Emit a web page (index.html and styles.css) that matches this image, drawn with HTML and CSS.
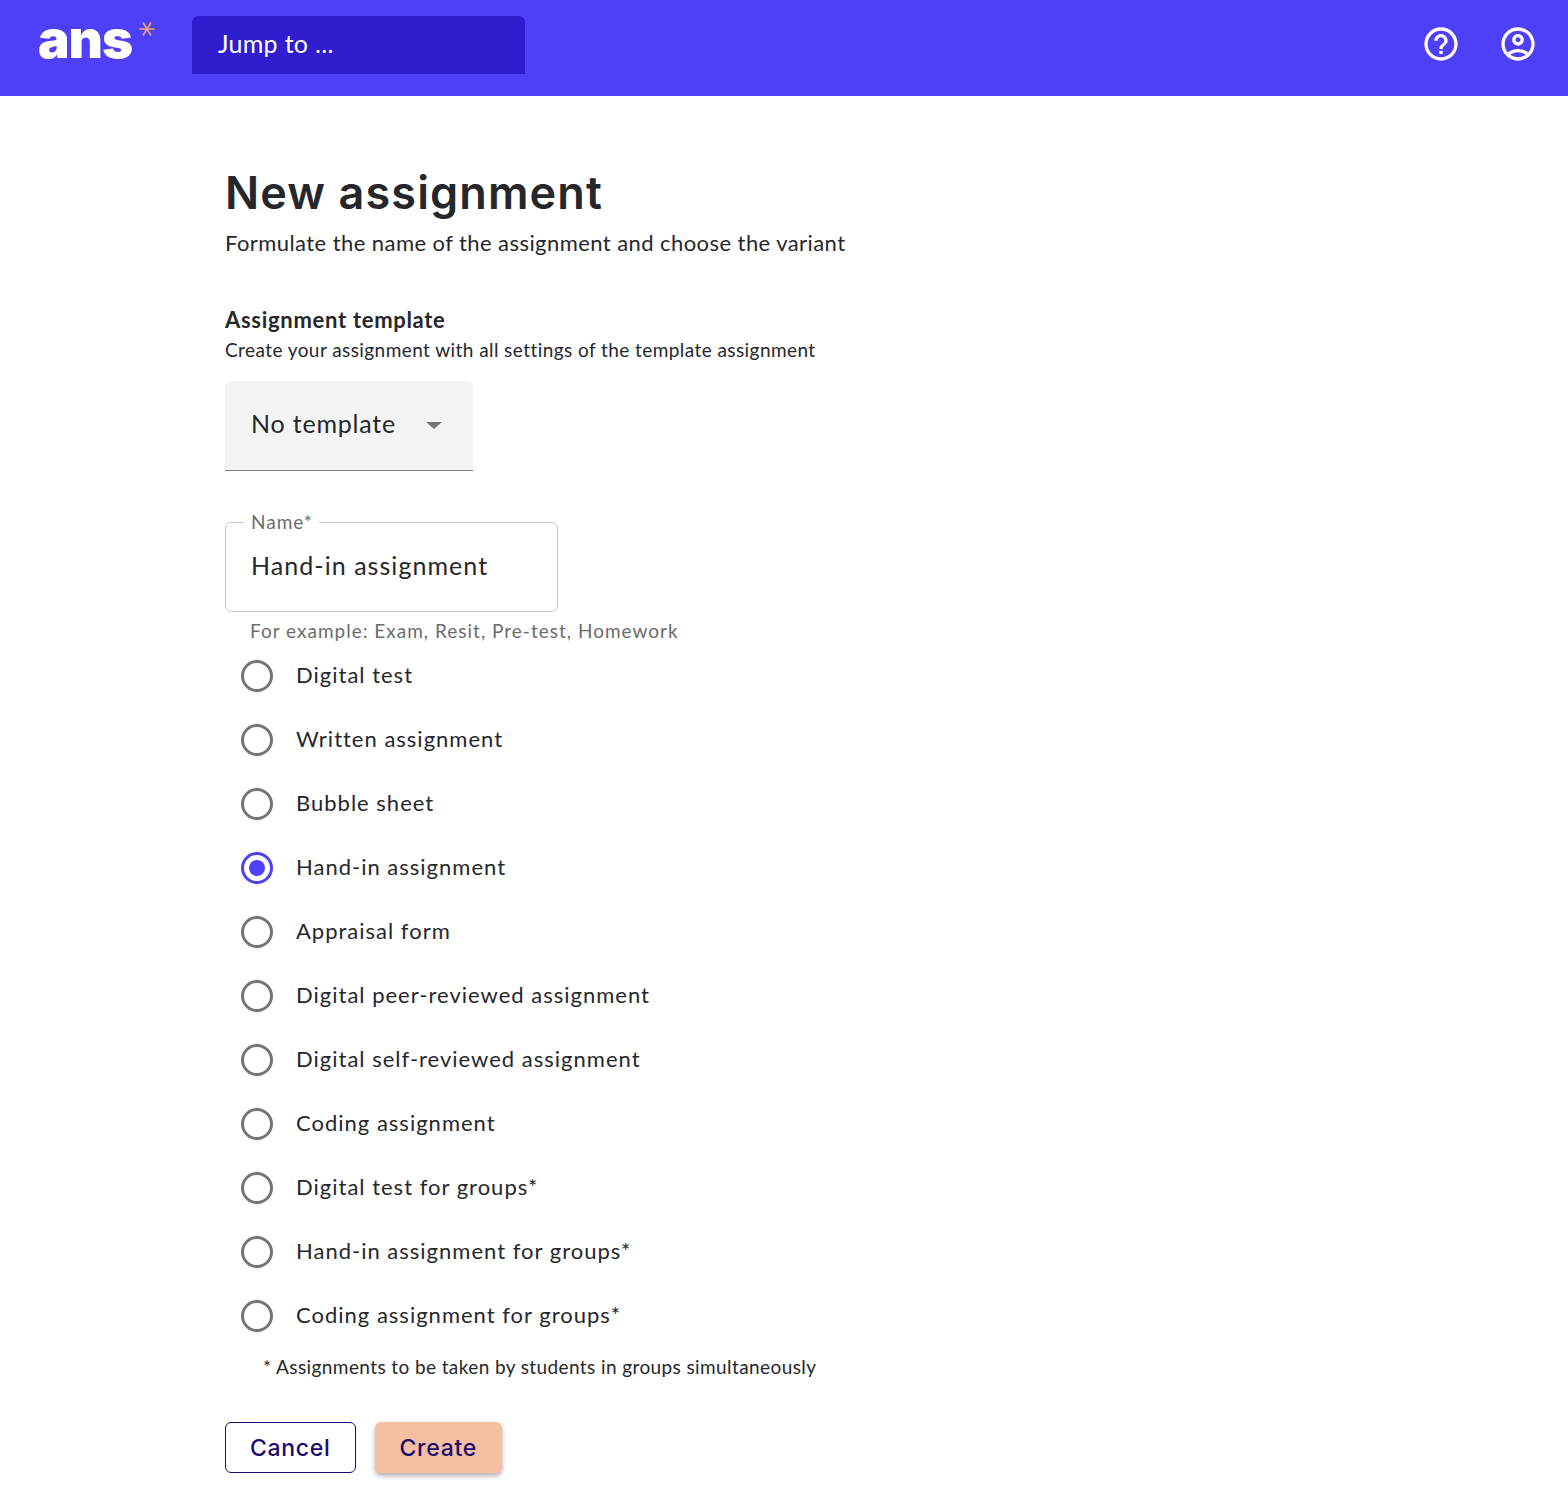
FILE: index.html
```html
<!DOCTYPE html>
<html lang="en">
<head>
    <meta charset="UTF-8">
    <title>New assignment</title>
    <link rel="stylesheet" href="styles.css">
</head>
<body>
    <header class="topbar">
        <div class="logo">
            <span class="logo-word">ans</span>
            <svg class="logo-star" viewBox="0 0 16 16"><path d="M0.5 8h15M4 1.5l8 13M12 1.5l-8 13"/></svg>
        </div>
        <div class="jump">Jump to ...</div>
        <div class="topbar-icons">
            <svg class="icon" viewBox="0 0 24 24"><path d="M11 18h2v-2h-2v2zm1-16C6.48 2 2 6.48 2 12s4.48 10 10 10 10-4.48 10-10S17.52 2 12 2zm0 18c-4.41 0-8-3.59-8-8s3.59-8 8-8 8 3.59 8 8-3.59 8-8 8zm0-14c-2.21 0-4 1.79-4 4h2c0-1.1.9-2 2-2s2 .9 2 2c0 2-3 1.75-3 5h2c0-2.25 3-2.5 3-5 0-2.21-1.79-4-4-4z"/></svg>
            <svg class="icon" viewBox="0 0 24 24"><path d="M12 2C6.48 2 2 6.48 2 12s4.48 10 10 10 10-4.48 10-10S17.52 2 12 2zM7.35 18.5C8.66 17.56 10.26 17 12 17s3.34.56 4.65 1.5c-1.31.94-2.91 1.5-4.65 1.5s-3.34-.56-4.65-1.5zm10.79-1.38C16.45 15.8 14.32 15 12 15s-4.45.8-6.14 2.12C4.7 15.73 4 13.95 4 12c0-4.42 3.58-8 8-8s8 3.58 8 8c0 1.95-.7 3.73-1.86 5.12z"/><path d="M12 6c-1.93 0-3.5 1.57-3.5 3.5S10.07 13 12 13s3.5-1.57 3.5-3.5S13.93 6 12 6zm0 5c-.83 0-1.5-.67-1.5-1.5S11.17 8 12 8s1.5.67 1.5 1.5S12.83 11 12 11z"/></svg>
        </div>
    </header>

    <main class="content">
        <h1 class="title">New assignment</h1>
        <p class="subtitle">Formulate the name of the assignment and choose the variant</p>

        <h2 class="section-title">Assignment template</h2>
        <p class="section-text">Create your assignment with all settings of the template assignment</p>

        <div class="select">
            <span class="select-text">No template</span>
            <span class="select-arrow"></span>
        </div>

        <div class="field">
            <span class="field-label">Name*</span>
            <span class="field-value">Hand-in assignment</span>
        </div>
        <p class="hint">For example: Exam, Resit, Pre-test, Homework</p>

        <div class="radios">
            <div class="radio-row"><span class="radio"></span>Digital test</div>
            <div class="radio-row"><span class="radio"></span>Written assignment</div>
            <div class="radio-row"><span class="radio"></span>Bubble sheet</div>
            <div class="radio-row"><span class="radio checked"></span>Hand-in assignment</div>
            <div class="radio-row"><span class="radio"></span>Appraisal form</div>
            <div class="radio-row"><span class="radio"></span>Digital peer-reviewed assignment</div>
            <div class="radio-row"><span class="radio"></span>Digital self-reviewed assignment</div>
            <div class="radio-row"><span class="radio"></span>Coding assignment</div>
            <div class="radio-row"><span class="radio"></span>Digital test for groups*</div>
            <div class="radio-row"><span class="radio"></span>Hand-in assignment for groups*</div>
            <div class="radio-row"><span class="radio"></span>Coding assignment for groups*</div>
        </div>
        <p class="footnote">* Assignments to be taken by students in groups simultaneously</p>

        <div class="buttons">
            <button class="btn btn-outline">Cancel</button>
            <button class="btn btn-primary">Create</button>
        </div>
    </main>
</body>
</html>
```

FILE: styles.css
```css
* {
    box-sizing: border-box;
}
body {
    margin: 0;
    background: white;
    color: #26272b;
    font-family: Lato, "Noto Sans", sans-serif;
}
p, h1, h2 {
    margin: 0;
}

/* Top bar */
.topbar {
    display: flex;
    align-items: flex-start;
    height: 96px;
    padding: 16px 30px 0 38px;
    background: #503ff8;
}
.logo {
    display: flex;
    width: 154px;
    height: 58px;
}
.logo-word {
    margin-top: -2px;
    color: white;
    font-family: Inter, sans-serif;
    font-size: 53px;
    font-weight: 900;
    line-height: 50px;
    letter-spacing: -1px;
}
.logo-star {
    width: 16px;
    height: 16px;
    margin: 5px 0 0 7px;
    fill: none;
    stroke: #f0a674;
    stroke-width: 1.5;
}
.jump {
    width: 333px;
    height: 58px;
    padding-left: 26px;
    border-radius: 6px 6px 0 0;
    background: #2f1dcf;
    color: white;
    font-size: 25px;
    line-height: 54px;
    letter-spacing: 0.3px;
}
.topbar-icons {
    display: flex;
    gap: 37px;
    margin-left: auto;
    padding-top: 8px;
}
.icon {
    width: 40px;
    height: 40px;
    fill: white;
}

/* Form */
.content {
    padding: 68px 0 17px 225px;
}
.title {
    color: #26272b;
    font-family: Inter, sans-serif;
    font-size: 45px;
    font-weight: 600;
    line-height: 58px;
    letter-spacing: 1.1px;
}
.subtitle {
    margin-top: 7px;
    font-size: 22px;
    line-height: 28px;
    letter-spacing: 0.43px;
}
.section-title {
    margin-top: 48px;
    font-size: 22px;
    font-weight: 700;
    line-height: 30px;
    letter-spacing: 0.7px;
}
.section-text {
    font-size: 19px;
    line-height: 29px;
    letter-spacing: 0.43px;
}
.select {
    display: flex;
    align-items: center;
    justify-content: space-between;
    width: 248px;
    height: 90px;
    margin-top: 17px;
    padding: 0 31px 0 26px;
    border-bottom: 1px solid #808080;
    border-radius: 6px 6px 0 0;
    background: #f4f4f4;
    font-size: 25px;
    letter-spacing: 0.8px;
}
.select-text {
    padding-bottom: 6px;
}
.select-arrow {
    border-top: 7px solid #757575;
    border-left: 8px solid transparent;
    border-right: 8px solid transparent;
}
.field {
    position: relative;
    width: 333px;
    height: 90px;
    margin-top: 51px;
    padding-left: 25px;
    border: 1px solid #c8c8c8;
    border-radius: 6px;
    font-size: 25px;
    line-height: 84px;
    letter-spacing: 1.05px;
}
.field-label {
    position: absolute;
    top: -12px;
    left: 18px;
    padding: 0 6px 0 7px;
    background: white;
    color: #6c6c6c;
    font-size: 19px;
    line-height: 22px;
    letter-spacing: 1px;
}
.hint {
    padding: 7px 0 0 25px;
    color: #6c6c6c;
    font-size: 19px;
    line-height: 24px;
    letter-spacing: 1px;
}
.radio-row {
    display: flex;
    align-items: center;
    height: 64px;
    padding: 0 0 2px 16px;
    font-size: 22px;
    letter-spacing: 1px;
}
.radio {
    flex: none;
    width: 32px;
    height: 32px;
    margin: 4px 23px 0 0;
    border: 3px solid #757575;
    border-radius: 50%;
}
.radio.checked {
    padding: 5px;
    border-color: #503ff8;
    background: #503ff8 content-box;
}
.footnote {
    margin-top: 8px;
    padding-left: 38px;
    font-size: 19px;
    line-height: 24px;
    letter-spacing: 0.4px;
}
.buttons {
    display: flex;
    gap: 19px;
    margin-top: 43px;
}
.btn {
    height: 51px;
    border-radius: 6px;
    color: #1a0a6e;
    font-family: Inter, sans-serif;
    font-size: 23px;
    font-weight: 500;
    letter-spacing: 0.7px;
}
.btn-outline {
    padding: 0 24px;
    border: 1px solid #1a0a6e;
    background: white;
}
.btn-primary {
    padding: 0 25px;
    border: none;
    background: #f5bfa2;
    box-shadow: 0 3px 5px rgba(0, 0, 0, 0.3);
}
```
